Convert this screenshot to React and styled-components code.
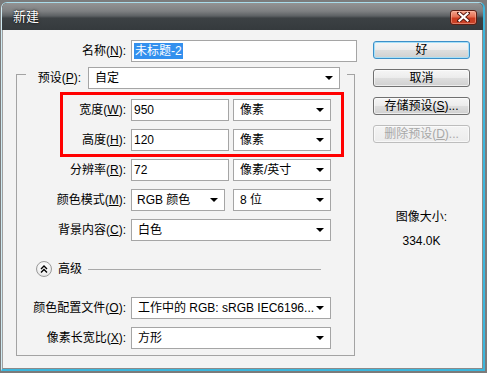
import React from 'react';
import styled, { createGlobalStyle } from 'styled-components';

const FONT = `"Liberation Sans", "Noto Sans CJK SC", sans-serif`;

const Global = createGlobalStyle`
  html, body { margin: 0; padding: 0; background: #7b7b7b; }
  body { font-family: ${FONT}; font-size: 12px; color: #000; }
  #root { width: 487px; height: 373px; overflow: hidden; }
  * { box-sizing: border-box; }
`;

const Window = styled.div`
  margin: 2px 0 0 1px;
  width: 484px;
  height: 369px;
  display: flex;
  flex-direction: column;
  border-style: solid;
  border-width: 1px 2px 2px 1px;
  border-color: #a8dbe9 #3cb6dc #3cb6dc #cfeaf2;
  border-radius: 6px 6px 0 0;
  background: #3a3f42;
`;

const TitleBar = styled.div`
  flex: none;
  height: 27px;
  display: flex;
  align-items: center;
  justify-content: space-between;
  padding: 1px 6px 0 11px;
  border-radius: 5px 5px 0 0;
  background: linear-gradient(to bottom, #939393 0%, #7e8082 30%, #5d6164 48%, #3c4144 56%, #353a3d 100%);
`;

const Title = styled.span`
  color: #fff;
  font-size: 13px;
  line-height: 16px;
  text-shadow: 0 0 3px rgba(0, 0, 0, 0.8), 0 0 1px #000;
`;

const CloseButton = styled.div`
  width: 27px;
  height: 15px;
  border: 1px solid #5c1d12;
  border-radius: 3px;
  display: flex;
  align-items: center;
  justify-content: center;
  background: linear-gradient(to bottom, #f4a58e 0%, #e56f52 45%, #cc3b1f 55%, #c8442a 100%);
  box-shadow: inset 0 0 0 1px rgba(255, 200, 180, 0.45);
`;

const Body = styled.div`
  flex: 1;
  display: grid;
  grid-template-columns: 352px 1fr;
  background: #f3f3f3;
  border-left: 1px solid #a0a0a0;
  border-right: 1px solid #8a8a8a;
  border-bottom: 1px solid #8a8a8a;
`;

const LeftCol = styled.div`
  padding: 10px 0 0 13px;
  display: flex;
  flex-direction: column;
  min-width: 0;
`;

const Row = styled.div`
  display: flex;
  align-items: center;
  height: 22px;
  gap: ${(p) => p.$gap ?? 5}px;
  margin-left: ${(p) => p.$indent ?? 0}px;
  margin-top: ${(p) => p.$top ?? 0}px;
  flex: none;
`;

const Label = styled.label`
  width: ${(p) => p.$w}px;
  flex: none;
  text-align: right;
  white-space: nowrap;
  line-height: 14px;
  & u { text-decoration: underline; text-underline-offset: 1px; }
`;

const Input = styled.div`
  width: ${(p) => p.$w}px;
  height: 22px;
  flex: none;
  background: #fff;
  border: 1px solid #a5a5a5;
  display: flex;
  align-items: center;
  padding-left: 2px;
  line-height: 14px;
  white-space: nowrap;
`;

const Selected = styled.span`
  background: #3390ee;
  color: #fff;
  padding: 1px 1px;
  line-height: 14px;
`;

const Select = styled.div`
  width: ${(p) => p.$w}px;
  height: 22px;
  flex: none;
  background: ${(p) => (p.$bare ? '#fff' : '#fff')};
  border: 1px solid #a5a5a5;
  display: flex;
  align-items: center;
  padding: 0 6px 0 ${(p) => p.$pl ?? 6}px;
  line-height: 14px;
  white-space: nowrap;
  overflow: hidden;
`;

const SelectText = styled.span`
  flex: 1;
  overflow: hidden;
`;

const Caret = styled.span`
  flex: none;
  width: 0;
  height: 0;
  border-left: 4px solid transparent;
  border-right: 4px solid transparent;
  border-top: 4px solid #000;
`;

const Group = styled.div`
  margin-top: 12px;
  width: 339px;
  border: 1px solid #a3a3a3;
  padding-bottom: 6px;
  display: flex;
  flex-direction: column;
`;

const Legend = styled.div`
  margin: -8px 0 0 9px;
  align-self: flex-start;
  display: flex;
  align-items: center;
  height: 22px;
  padding: 0 7px 0 11px;
  gap: 7px;
  background: #f3f3f3;
`;

const Highlight = styled.div`
  margin: 3px 0 0 43px;
  width: 284px;
  border: 3px solid #ff0000;
  padding: 4px 0 3px 0;
  display: flex;
  flex-direction: column;
  gap: 8px;
`;

const Advanced = styled.div`
  display: flex;
  align-items: center;
  height: 16px;
  margin: 20px 33px 0 19px;
`;

const RoundButton = styled.div`
  width: 16px;
  height: 16px;
  flex: none;
  border-radius: 50%;
  border: 1px solid #9a9a9a;
  background: radial-gradient(circle at 50% 35%, #ffffff 0%, #f2f2f2 55%, #d6d6d6 100%);
  display: flex;
  align-items: center;
  justify-content: center;
`;

const AdvancedText = styled.span`
  margin-left: 6px;
  line-height: 14px;
`;

const Rule = styled.div`
  flex: 1;
  height: 1px;
  margin-left: 6px;
  background: #a8a8a8;
`;

const RightCol = styled.div`
  padding: 11px 0 0 18px;
  display: flex;
  flex-direction: column;
  align-items: flex-start;
`;

const Buttons = styled.div`
  display: flex;
  flex-direction: column;
  gap: 10px;
`;

const Button = styled.div`
  width: 97px;
  height: 18px;
  border-radius: 3px;
  border: 1px solid ${(p) => (p.$default ? '#3c8fc8' : p.$disabled ? '#bdbdbd' : '#707070')};
  color: ${(p) => (p.$disabled ? '#a8a8a8' : '#000')};
  background: ${(p) =>
    p.$disabled
      ? 'linear-gradient(to bottom, #f4f4f4, #ececec)'
      : 'linear-gradient(to bottom, #f6f6f6 0%, #ececec 48%, #dedede 52%, #d0d0d0 100%)'};
  box-shadow: ${(p) => (p.$default ? 'inset 0 0 0 1px #a6e0f8' : 'inset 0 0 0 1px rgba(255,255,255,0.6)')};
  display: flex;
  align-items: center;
  justify-content: center;
  line-height: 14px;
  white-space: nowrap;
`;

const Info = styled.div`
  width: 97px;
  margin-top: 67px;
  display: flex;
  flex-direction: column;
  align-items: center;
  gap: 10px;
  line-height: 14px;
`;

const Drop = ({ w, pl, children }) => (
  <Select $w={w} $pl={pl}>
    <SelectText>{children}</SelectText>
    <Caret />
  </Select>
);

export default function App() {
  return (
    <>
      <Global />
      <Window>
        <TitleBar>
          <Title>新建</Title>
          <CloseButton>
            <svg width="13" height="10" viewBox="0 0 13 10">
              <path d="M2 1 L11 9 M11 1 L2 9" stroke="#5a1a10" strokeWidth="4" strokeLinecap="square" />
              <path d="M2.5 1.5 L10.5 8.5 M10.5 1.5 L2.5 8.5" stroke="#fff" strokeWidth="2.2" strokeLinecap="square" />
            </svg>
          </CloseButton>
        </TitleBar>
        <Body>
          <LeftCol>
            <Row>
              <Label $w={110}>名称(<u>N</u>):</Label>
              <Input $w={226}>
                <Selected>未标题-2</Selected>
              </Input>
            </Row>
            <Group>
              <Legend>
                <Label $w={44}>预设(<u>P</u>):</Label>
                <Drop w={252} pl={6}>自定</Drop>
              </Legend>
              <Highlight>
                <Row $gap={5}>
                  <Label $w={63}>宽度(<u>W</u>):</Label>
                  <Input $w={98}>950</Input>
                  <Row $gap={0} $indent={-1}>
                    <Drop w={98}>像素</Drop>
                  </Row>
                </Row>
                <Row $gap={5}>
                  <Label $w={63}>高度(<u>H</u>):</Label>
                  <Input $w={98}>120</Input>
                  <Row $gap={0} $indent={-1}>
                    <Drop w={98}>像素</Drop>
                  </Row>
                </Row>
              </Highlight>
              <Row $top={2}>
                <Label $w={109}>分辨率(<u>R</u>):</Label>
                <Input $w={98}>72</Input>
                <Row $indent={-1}>
                  <Drop w={98}>像素/英寸</Drop>
                </Row>
              </Row>
              <Row $top={8}>
                <Label $w={109}>颜色模式(<u>M</u>):</Label>
                <Drop w={94} pl={5}>RGB 颜色</Drop>
                <Row $indent={3}>
                  <Drop w={98}>8 位</Drop>
                </Row>
              </Row>
              <Row $top={8}>
                <Label $w={109}>背景内容(<u>C</u>):</Label>
                <Drop w={200}>白色</Drop>
              </Row>
              <Advanced>
                <RoundButton>
                  <svg width="8" height="8" viewBox="0 0 8 8">
                    <path d="M1 4 L4 1 L7 4 M1 7.5 L4 4.5 L7 7.5" stroke="#000" strokeWidth="1.4" fill="none" />
                  </svg>
                </RoundButton>
                <AdvancedText>高级</AdvancedText>
                <Rule />
              </Advanced>
              <Row $top={20}>
                <Label $w={109}>颜色配置文件(<u>O</u>):</Label>
                <Drop w={200}>工作中的 RGB: sRGB IEC6196...</Drop>
              </Row>
              <Row $top={8}>
                <Label $w={109}>像素长宽比(<u>X</u>):</Label>
                <Drop w={200}>方形</Drop>
              </Row>
            </Group>
          </LeftCol>
          <RightCol>
            <Buttons>
              <Button $default>好</Button>
              <Button>取消</Button>
              <Button>存储预设(<u>S</u>)...</Button>
              <Button $disabled>删除预设(<u>D</u>)...</Button>
            </Buttons>
            <Info>
              <span>图像大小:</span>
              <span>334.0K</span>
            </Info>
          </RightCol>
        </Body>
      </Window>
    </>
  );
}
